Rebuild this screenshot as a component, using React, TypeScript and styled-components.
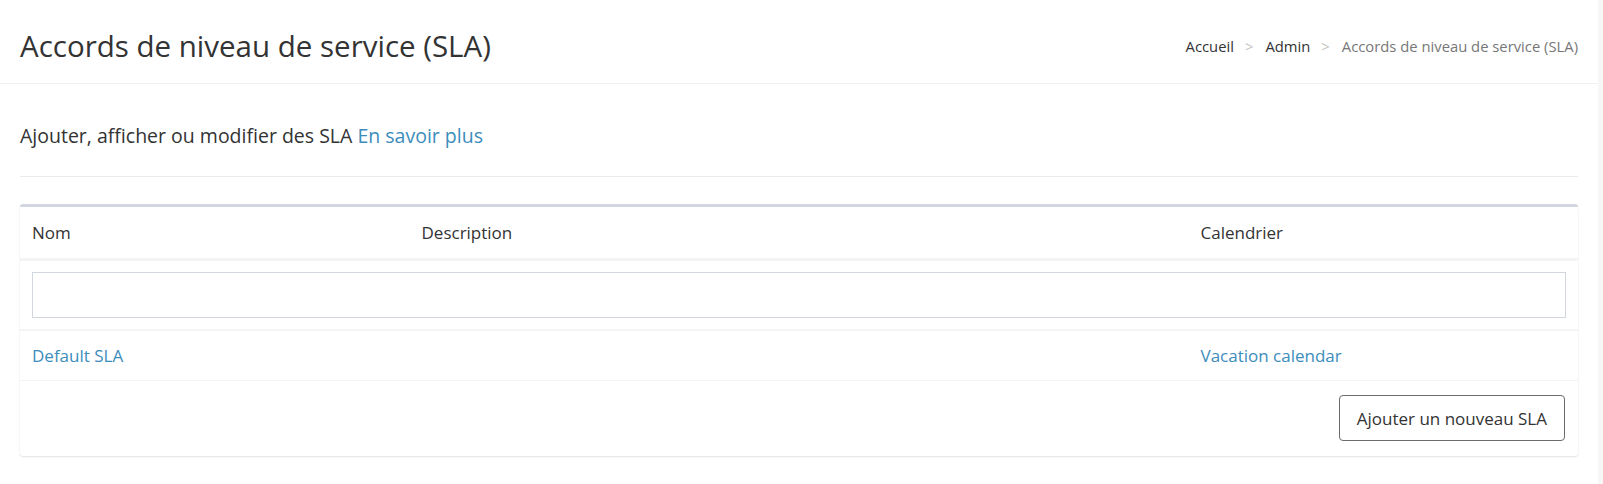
import React from "react";
import styled, { createGlobalStyle } from "styled-components";

const GlobalStyle = createGlobalStyle`
  html, body {
    margin: 0;
    padding: 0;
    background: #fff;
  }
  body {
    font-family: "Open Sans", "Noto Sans", sans-serif;
    color: #333;
  }
`;

const Shell = styled.div`
  display: flex;
  min-height: 484px;
`;

const Main = styled.main`
  flex: 1;
  min-width: 0;
`;

const Gutter = styled.div`
  width: 5px;
  background: #f7f7f8;
`;

const PageHeader = styled.header`
  display: flex;
  align-items: center;
  justify-content: space-between;
  padding: 25px 20px 17px;
  border-bottom: 1px solid #f1f1f1;
`;

const Title = styled.h1`
  margin: 0;
  font-size: 29.5px;
  font-weight: 400;
  line-height: normal;
  color: #333;
`;

const Crumbs = styled.ol`
  display: flex;
  list-style: none;
  margin: 0;
  padding: 0;
  font-size: 14.8px;
  line-height: normal;

  & > li + li::before {
    content: ">";
    color: #c4c4c4;
    margin: 0 12px 0 11px;
  }
`;

const Crumb = styled.li<{ $active?: boolean }>`
  color: ${(p) => (p.$active ? "#777" : "#333")};
`;

const Content = styled.section`
  padding: 38px 20px 0;
`;

const Intro = styled.p`
  margin: 0;
  font-size: 19.5px;
  line-height: normal;
`;

const TextLink = styled.a`
  color: #3c8dbc;
  text-decoration: none;
  cursor: pointer;
`;

const Divider = styled.hr`
  margin: 27px 0;
  border: 0;
  border-top: 1px solid #ebebeb;
`;

const Card = styled.div`
  background: #fff;
  border-top: 3px solid #d2d6de;
  border-radius: 3px;
  box-shadow: 0 1px 2px rgba(0, 0, 0, 0.12);
`;

const Table = styled.table`
  width: 100%;
  border-collapse: separate;
  border-spacing: 0;
  table-layout: fixed;
  font-size: 17px;
  line-height: normal;
`;

const Th = styled.th`
  text-align: left;
  font-weight: 400;
  padding: 14px 12px;
  border-bottom: 3px solid #f4f4f4;
`;

const Td = styled.td<{ $pad?: string; $line?: number }>`
  padding: ${(p) => p.$pad ?? "13px 12px"};
  border-bottom: ${(p) => p.$line ?? 1}px solid #f4f4f4;
`;

const Filter = styled.input`
  display: block;
  width: 100%;
  height: 46px;
  box-sizing: border-box;
  border: 1px solid #d2d6de;
  padding: 0 12px;
  font: inherit;
  outline: none;
`;

const CardFooter = styled.div`
  display: flex;
  justify-content: flex-end;
  padding: 14px 13px 15px;
`;

const Button = styled.button`
  height: 46px;
  padding: 0 17px;
  background: #fff;
  border: 1px solid #6b6b6b;
  border-radius: 4px;
  font-family: inherit;
  font-size: 17px;
  color: #333;
  cursor: pointer;
`;

const slas = [{ name: "Default SLA", description: "", calendar: "Vacation calendar" }];

export default function App() {
  return (
    <Shell>
      <GlobalStyle />
      <Main>
        <PageHeader>
          <Title>Accords de niveau de service (SLA)</Title>
          <Crumbs>
            <Crumb>Accueil</Crumb>
            <Crumb>Admin</Crumb>
            <Crumb $active>Accords de niveau de service (SLA)</Crumb>
          </Crumbs>
        </PageHeader>

        <Content>
          <Intro>
            Ajouter, afficher ou modifier des SLA <TextLink>En savoir plus</TextLink>
          </Intro>
          <Divider />

          <Card>
            <Table>
              <colgroup>
                <col style={{ width: "25%" }} />
                <col style={{ width: "50%" }} />
                <col style={{ width: "25%" }} />
              </colgroup>
              <thead>
                <tr>
                  <Th>Nom</Th>
                  <Th>Description</Th>
                  <Th>Calendrier</Th>
                </tr>
              </thead>
              <tbody>
                <tr>
                  <Td colSpan={3} $pad="11px 12px" $line={2}>
                    <Filter type="text" />
                  </Td>
                </tr>
                {slas.map((s) => (
                  <tr key={s.name}>
                    <Td>
                      <TextLink>{s.name}</TextLink>
                    </Td>
                    <Td>{s.description}</Td>
                    <Td>
                      <TextLink>{s.calendar}</TextLink>
                    </Td>
                  </tr>
                ))}
              </tbody>
            </Table>
            <CardFooter>
              <Button>Ajouter un nouveau SLA</Button>
            </CardFooter>
          </Card>
        </Content>
      </Main>
      <Gutter />
    </Shell>
  );
}
